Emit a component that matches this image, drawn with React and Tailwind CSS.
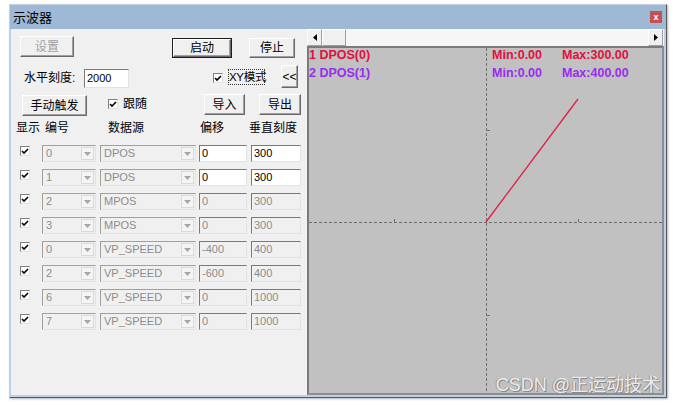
import React from 'react';

const rows = [
  { ch: '0', src: 'DPOS', off: '0', scale: '300', on: true },
  { ch: '1', src: 'DPOS', off: '0', scale: '300', on: true },
  { ch: '2', src: 'MPOS', off: '0', scale: '300' },
  { ch: '3', src: 'MPOS', off: '0', scale: '300' },
  { ch: '0', src: 'VP_SPEED', off: '-400', scale: '400' },
  { ch: '2', src: 'VP_SPEED', off: '-600', scale: '400' },
  { ch: '6', src: 'VP_SPEED', off: '0', scale: '1000' },
  { ch: '7', src: 'VP_SPEED', off: '0', scale: '1000' },
];

const Btn = ({ className = '', children, disabled, def }) => {
  const inner = (
    <div
      className={`flex h-full w-full items-center justify-center border border-t-white border-l-white border-r-[#696969] border-b-[#696969] bg-[#f0f0f0] text-[12px] leading-none shadow-[inset_-1px_-1px_0_#a0a0a0] ${
        disabled ? 'text-[#a0a0a0]' : 'text-black'
      }`}
    >
      {children}
    </div>
  );
  if (def) return <div className={`border border-[#1e1e1e] ${className}`}>{inner}</div>;
  return <div className={className}>{inner}</div>;
};

const Check = ({ className = '' }) => (
  <div
    className={`flex h-[10px] w-[10px] items-center justify-center border border-t-[#808080] border-l-[#808080] border-r-[#e3e3e3] border-b-[#e3e3e3] bg-white ${className}`}
  >
    <svg width="8" height="7" viewBox="0 0 8 7">
      <path d="M1 3 L3 5 L7 1" stroke="#000" strokeWidth="1.6" fill="none" />
    </svg>
  </div>
);

const Combo = ({ className = '', value }) => (
  <div
    className={`flex h-[17px] border border-t-[#a0a0a0] border-l-[#a0a0a0] border-r-[#e3e3e3] border-b-[#e3e3e3] bg-[#f0f0f0] ${className}`}
  >
    <span className="flex-1 pl-[3px] text-[11px] leading-[15px] text-[#8c8c8c]">{value}</span>
    <span className="my-[1px] mr-[1px] flex w-[13px] items-center justify-center border border-[#dadada] bg-[#f4f4f4]">
      <svg width="7" height="4" viewBox="0 0 7 4">
        <path d="M0 0 L7 0 L3.5 4 Z" fill="#a6a6a6" />
      </svg>
    </span>
  </div>
);

const Field = ({ className = '', value, on }) => (
  <div
    className={`h-[17px] border border-t-[#7a7a7a] border-l-[#7a7a7a] border-r-[#e3e3e3] border-b-[#e3e3e3] pl-[2px] text-[11px] leading-[15px] ${
      on ? 'bg-white text-black' : 'bg-[#f0f0f0] text-[#8c8c8c]'
    } ${className}`}
  >
    {value}
  </div>
);

const App = () => {
  return (
    <div className="h-[405px] w-[676px] bg-white pl-[9px] pt-[4px] font-['Liberation_Sans','Noto_Sans_CJK_SC',sans-serif]">
      <div className="flex h-[394px] w-[658px] flex-col border border-t-[#c8d2dc] border-l-[#c8d2dc] border-r-[#5a5a5a] border-b-[#5a5a5a] shadow-[1px_1px_2px_rgba(0,0,0,0.3)]">
        {/* Title */}
        <div className="flex h-[24px] items-center justify-between bg-[#9eb9d5] pl-[3px] pr-[4px]">
          <span className="text-[13px] leading-none text-black">示波器</span>
          <div className="flex h-[12px] w-[12px] items-center justify-center bg-[#c75050] text-[9px] font-bold leading-none text-white">
            x
          </div>
        </div>

        <div className="flex flex-1 border-l border-b-2 border-r-2 border-[#b9d1ea]">
          {/* Left controls */}
          <div className="flex w-[296px] flex-col bg-[#f0f0f0] pt-[7px]">
            <div className="flex">
              <Btn disabled className="ml-[9px] h-[21px] w-[54px]">设置</Btn>
              <Btn def className="ml-[98px] mt-[2px] h-[20px] w-[60px]">启动</Btn>
              <Btn className="ml-[17px] mt-[2px] h-[20px] w-[46px]">停止</Btn>
            </div>

            <div className="mt-[7px] flex h-[23px] items-start">
              <span className="ml-[13px] mt-[5px] w-[60px] text-[12px] leading-[17px]">水平刻度:</span>
              <div className="mt-[4px] h-[19px] w-[45px] border border-t-[#7a7a7a] border-l-[#7a7a7a] border-r-[#e3e3e3] border-b-[#e3e3e3] bg-white pl-[2px] text-[11px] leading-[17px]">
                2000
              </div>
              <Check className="ml-[84px] mt-[8px]" />
              <span className="ml-[5px] mt-[4px] h-[16px] w-[37px] whitespace-nowrap border border-dotted border-[#333] text-[11.5px] leading-[14px] tracking-[-0.3px]">
                XY模式
              </span>
              <Btn className="ml-[16px] h-[23px] w-[17px]">&lt;&lt;</Btn>
            </div>

            <div className="mt-[6px] flex items-start">
              <Btn className="ml-[11px] mt-[1px] h-[21px] w-[65px]">手动触发</Btn>
              <div className="ml-[21px] flex w-[96px] items-center pt-[5px]">
                <Check />
                <span className="ml-[5px] text-[12px] leading-[10px]">跟随</span>
              </div>
              <Btn className="h-[21px] w-[41px]">导入</Btn>
              <Btn className="ml-[14px] h-[21px] w-[42px]">导出</Btn>
            </div>

            <div className="mt-[4px] flex h-[16px] items-center text-[12px] leading-none">
              <span className="ml-[5px] w-[29px]">显示</span>
              <span className="w-[63px]">编号</span>
              <span className="w-[92px]">数据源</span>
              <span className="w-[49px]">偏移</span>
              <span>垂直刻度</span>
            </div>

            <div className="mt-[9px] flex flex-col gap-[7px]">
              {rows.map((r, i) => (
                <div key={i} className="flex items-start">
                  <Check className="ml-[9px] mt-[1px]" />
                  <Combo className="ml-[12px] w-[54px]" value={r.ch} />
                  <Combo className="ml-[4px] w-[96px]" value={r.src} />
                  <Field className="ml-[3px] w-[48px]" value={r.off} on={r.on} />
                  <Field className="ml-[4px] w-[50px]" value={r.scale} on={r.on} />
                </div>
              ))}
            </div>
          </div>

          {/* Right scope */}
          <div className="flex w-[357px] flex-col">
            <div className="flex h-[17px] bg-[#f6f6f6]">
              <div className="flex h-[17px] w-[15px] items-center justify-center border border-t-white border-l-white border-r-[#a0a0a0] border-b-[#a0a0a0] bg-[#f0f0f0]">
                <svg width="4" height="7" viewBox="0 0 4 7">
                  <path d="M4 0 L0 3.5 L4 7 Z" fill="#000" />
                </svg>
              </div>
              <div className="h-[17px] w-[24px] border border-t-white border-l-white border-r-[#a0a0a0] border-b-[#a0a0a0] bg-[#f0f0f0]" />
              <div className="flex-1" />
              <div className="mr-[1px] flex h-[17px] w-[15px] items-center justify-center border border-t-white border-l-white border-r-[#a0a0a0] border-b-[#a0a0a0] bg-[#f0f0f0]">
                <svg width="4" height="7" viewBox="0 0 4 7">
                  <path d="M0 0 L4 3.5 L0 7 Z" fill="#000" />
                </svg>
              </div>
            </div>

            <div className="relative flex-1 border-2 border-t-[#7a7a7a] border-l-[#7a7a7a] border-r-[#8e8e8e] border-b-[#8e8e8e] bg-[#c0c1c0]">
              <svg className="absolute inset-0" width="353" height="345" viewBox="0 0 353 345">
                <line x1="177.5" y1="0" x2="177.5" y2="345" stroke="#707070" strokeWidth="1" strokeDasharray="3 2" />
                <line x1="0" y1="174.5" x2="353" y2="174.5" stroke="#707070" strokeWidth="1" strokeDasharray="3 2" />
                <line x1="85.5" y1="171" x2="85.5" y2="174" stroke="#707070" />
                <line x1="269.5" y1="171" x2="269.5" y2="174" stroke="#707070" />
                <line x1="178" y1="82.5" x2="181" y2="82.5" stroke="#707070" />
                <line x1="178" y1="267.5" x2="181" y2="267.5" stroke="#707070" />
                <line x1="177" y1="174" x2="269" y2="51" stroke="#e0204a" strokeWidth="1.3" />
              </svg>
              <div className="absolute left-0 top-[1px] flex flex-col gap-[5px] text-[12.5px] font-bold leading-[13px]">
                <div className="flex text-[#e2103e]">
                  <span className="w-[183px]">1 DPOS(0)</span>
                  <span className="w-[70px]">Min:0.00</span>
                  <span>Max:300.00</span>
                </div>
                <div className="flex text-[#9a2cf0]">
                  <span className="w-[183px]">2 DPOS(1)</span>
                  <span className="w-[70px]">Min:0.00</span>
                  <span>Max:400.00</span>
                </div>
              </div>
              <div className="absolute bottom-[-2px] right-[2px] text-[18px] leading-[20px] text-[#ececec] [text-shadow:1px_1px_0_#8a8a8a,-1px_0_0_#9a9a9a]">
                CSDN @正运动技术
              </div>
            </div>
          </div>
        </div>
      </div>
    </div>
  );
};

export default App;
